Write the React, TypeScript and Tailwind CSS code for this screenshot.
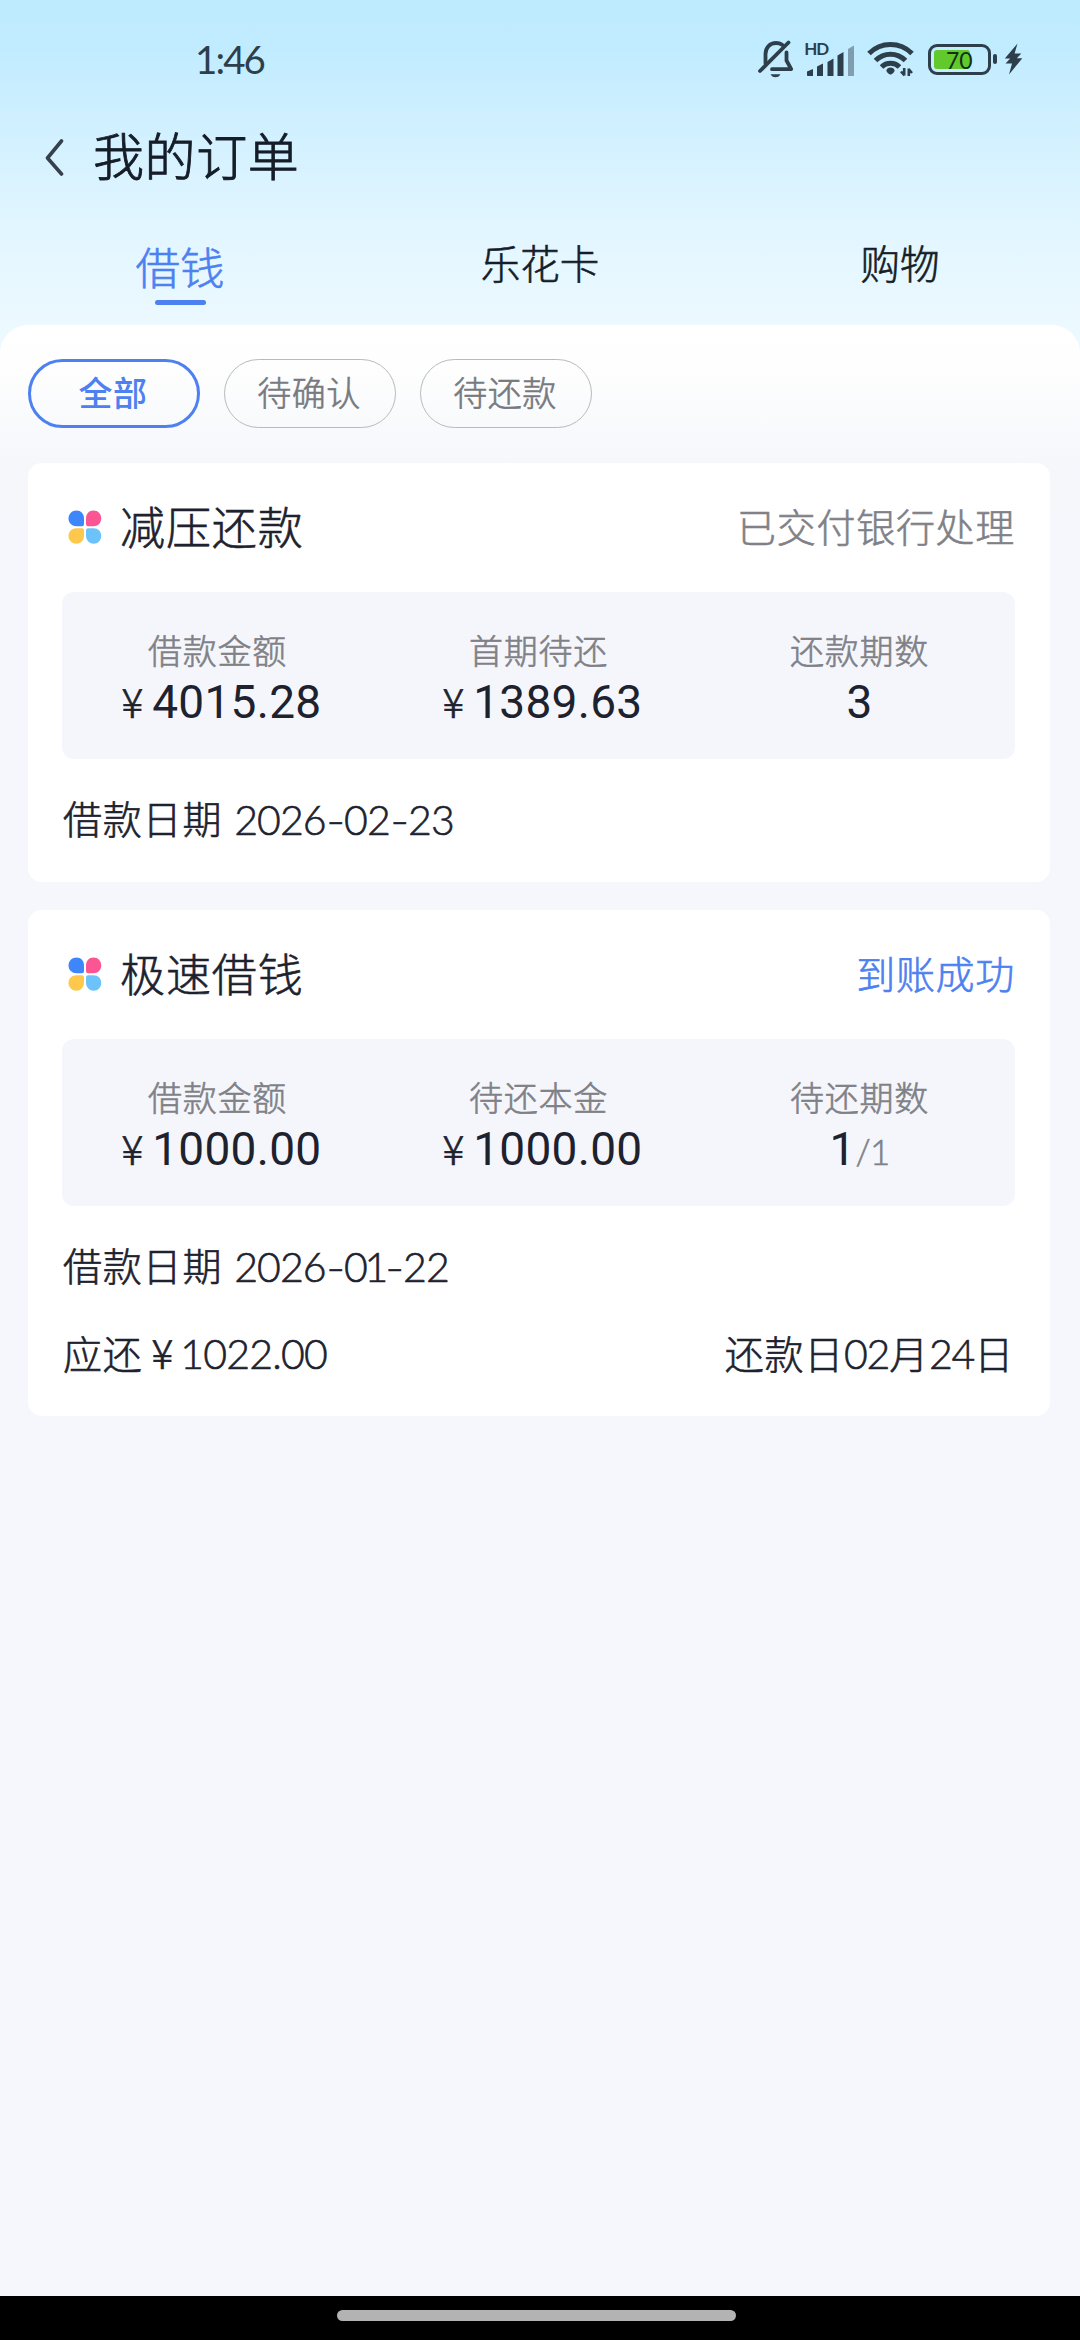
import React from 'react';

const CJK = "font-['Noto_Sans_CJK_SC',sans-serif]";
const LATO = "font-['Lato','Noto_Sans_CJK_SC',sans-serif] font-normal [-webkit-text-stroke:0px]";
const LATO_THIN = "font-['Lato','Noto_Sans_CJK_SC',sans-serif] font-light [-webkit-text-stroke:0.6px]";
const ROBOTO = "font-['Roboto','Noto_Sans_CJK_SC',sans-serif] font-normal [-webkit-text-stroke:0px]";

function MutedBell() {
  return (
    <svg width="36" height="38" viewBox="0 0 36 38" fill="none" stroke="#2d3f4b" strokeWidth="3.8" strokeLinecap="round">
      <path d="M7.5 23.5V14C7.5 7.5 12 3 18 3C20.5 3 22.5 3.6 24.3 4.8" />
      <path d="M28.5 12.5V20.5L33.2 29.2H14" strokeLinejoin="round" />
      <path d="M30.5 2.5L2 31" />
      <path d="M12.5 34.2H22.5C21 36.6 19.5 37.2 17.5 37.2S14 36.6 12.5 34.2Z" fill="#2d3f4b" stroke="none" />
    </svg>
  );
}

function Signal() {
  return (
    <svg className="[-webkit-text-stroke:0px]" width="52" height="38" viewBox="0 -4 52 38" fill="#2d3f4b">
      <text x="0.2" y="12" fontSize="17" fontWeight="700" fontFamily="Lato, sans-serif" textLength="25">HD</text>
      <path d="M3 28.5L9 26V33H3.8Q3 33 3 32.2Z" />
      <path d="M13 23.5L19 20.5V33H13Z" />
      <path d="M23.5 19L29.5 15.5V33H23.5Z" />
      <path d="M33.5 12.5L39.5 9V33H33.5Z" />
      <path d="M44 6L50 2.5V33H44Z" fillOpacity="0.45" />
    </svg>
  );
}

function Wifi() {
  return (
    <svg width="47" height="36" viewBox="0 0 47 36" fill="none" stroke="#2d3f4b" strokeWidth="5">
      <path d="M2 12.5C14 0.5 33 0.5 45 12.5" />
      <path d="M8.5 19.5C17 11 30 11 38.5 19.5" />
      <path d="M14.5 26C19.5 21 27.5 21 32.5 26" />
      <path d="M23.5 26.5C26 26.5 27.6 28 27.6 29.5C27.6 31 25 33.5 23.5 33.5S19.4 31 19.4 29.5C19.4 28 21 26.5 23.5 26.5Z" fill="#2d3f4b" stroke="none" />
      <path d="M37.2 27V34.5M37.5 34.5L34 30.5M41.8 35V27.5M41.5 28L45 32" strokeWidth="2.6" />
    </svg>
  );
}

function Battery() {
  return (
    <div className="flex items-center">
      <div className="flex h-[31px] w-[63px] rounded-[9px] border-[3px] border-[#2d3f4b] p-[3px]">
        <div className="relative h-full w-[36px] rounded-[3px] bg-[#62c92c]">
          <span className={`absolute -top-[2px] left-[12px] text-[23px] leading-[24px] text-[#12301c] ${LATO}`}>70</span>
        </div>
      </div>
      <div className="ml-[2px] h-[10px] w-[4px] rounded-[2px] bg-[#2d3f4b]" />
      <svg className="ml-[7px]" width="19" height="32" viewBox="0 0 19 32" fill="#2d3f4b">
        <path d="M13.5 0.5L0.8 15.5H6.2L1.5 20.5H8L5 31.5L18.3 15.2H12.8L17.3 10.5H10.6Z" />
      </svg>
    </div>
  );
}

function Flower() {
  return (
    <svg className="-mt-[2px]" width="34" height="34" viewBox="0 0 34 34">
      <path d="M8.5 0.5C13 0.5 16 4 16 8.5V14Q16 16.2 14 16.2H8.5C4 16.2 0.5 13 0.5 8.5S4 0.5 8.5 0.5Z" fill="#3d86fb" />
      <path d="M25.5 0.5C21 0.5 18 4 18 8.5V14Q18 16.2 20 16.2H25.5C30 16.2 33.2 13 33.2 8.5S30 0.5 25.5 0.5Z" fill="#fb5593" />
      <path d="M8.5 33.7C13 33.7 16 30 16 25.5V20.3Q16 18.2 14 18.2H8.5C4 18.2 0.5 21.2 0.5 25.7S4 33.7 8.5 33.7Z" fill="#fdc84b" />
      <path d="M25.5 33.7C21 33.7 18 30 18 25.5V20.3Q18 18.2 20 18.2H25.5C30 18.2 33.2 21.2 33.2 25.7S30 33.7 25.5 33.7Z" fill="#6cc3f9" />
    </svg>
  );
}

function Yen({ className }: { className: string }) {
  return (
    <span className={`text-[40.5px] font-light tracking-normal [-webkit-text-stroke:0.7px] ${CJK} ${className}`}>¥</span>
  );
}

function Stat({ label, amount, children }: { label: string; amount?: string; children?: React.ReactNode }) {
  return (
    <div className="flex flex-col items-center pt-[33px]">
      <div className="h-[50px] text-[34px] leading-[50px] tracking-[0.8px] text-[#7f8187]">{label}</div>
      <div className={`flex h-[54px] items-baseline text-[46px] leading-[54px] text-[#1d222e] ${ROBOTO}`}>
        {amount ? (
          <>
            <Yen className="mr-[9px] ml-[8px] leading-[50px]" />
            <span className="tracking-[0.3px]">{amount}</span>
          </>
        ) : (
          children
        )}
      </div>
    </div>
  );
}

function Card({
  title,
  status,
  statusClass,
  stats,
  children,
  className,
}: {
  title: string;
  status: string;
  statusClass: string;
  stats: React.ReactNode;
  children: React.ReactNode;
  className: string;
}) {
  return (
    <section className={`ml-[28px] w-[1022px] rounded-[14px] bg-white ${className}`}>
      <div className="flex h-[129px] items-center pr-[35px] pl-[40px]">
        <Flower />
        <h2 className="ml-[18px] pb-[4px] text-[45px] leading-[60px] font-light tracking-[0.9px] text-[#1d222e]">{title}</h2>
        <div className={`ml-auto pb-[5px] text-[39px] leading-[56px] tracking-[0.7px] ${statusClass}`}>{status}</div>
      </div>
      <div className="mr-[35px] ml-[34px] h-[167px] rounded-[12px] bg-[#f5f6fb]">
        <div className="-mx-[5px] grid grid-cols-3">{stats}</div>
      </div>
      <div className="pt-[17px] pr-[36px] pl-[35px] text-[#1d222e]">{children}</div>
    </section>
  );
}

function Hyphen() {
  return <span className="inline-block origin-center scale-x-[1.25] px-[2px]">-</span>;
}

function DateRow({ date }: { date: string[] }) {
  return (
    <div className="flex h-[88px] items-center pb-[5px] text-[39px] tracking-[0.8px]">
      <span>借款日期</span>
      <span className={`ml-[12px] pt-[4px] text-[41px] tracking-[-0.9px] ${LATO_THIN}`}>
        {date[0]}
        <Hyphen />
        <span className={date[1].includes('1') ? 'tracking-[-3.4px]' : ''}>{date[1]}</span>
        <Hyphen />
        {date[2]}
      </span>
    </div>
  );
}

function Tab({ label, active }: { label: string; active?: boolean }) {
  return active ? (
    <div className="flex flex-col items-center text-[#4d80f0]">
      <div className="h-[67px] text-[44.5px] leading-[66px]">{label}</div>
      <div className="h-[5px] w-[51px] rounded-full bg-[#4d80f0]" />
    </div>
  ) : (
    <div className="flex flex-col items-center text-[39.5px] leading-[58px] text-[#141d28]">{label}</div>
  );
}

function Pill({ label, active }: { label: string; active?: boolean }) {
  return (
    <div
      className={
        active
          ? 'flex h-[69px] w-[172px] items-center justify-center rounded-full border-[3px] border-[#4d80f0] pr-[2px] pb-[5px] text-[34px] font-medium tracking-[0.5px] text-[#4d80f0] [-webkit-text-stroke:0px]'
          : 'flex h-[69px] w-[172px] items-center justify-center rounded-full border border-[#b9babd] pr-[2px] pb-[5px] text-[34px] tracking-[0.5px] text-[#77797f]'
      }
    >
      {label}
    </div>
  );
}

export default function App() {
  return (
    <div
      className={`flex h-[2340px] w-[1080px] flex-col overflow-hidden bg-[#f5f7fc] font-light whitespace-nowrap [-webkit-text-stroke:0.6px] ${CJK}`}
    >
      <header className="-mb-[30px] h-[355px] shrink-0 bg-[linear-gradient(180deg,#bfebff_0px,#c1ecff_50px,#d3f1ff_140px,#e2f6ff_230px,#ecf9ff_325px)]">
        <div className="flex h-[118px] items-center">
          <div className={`ml-[195px] text-[38.5px] leading-[50px] tracking-[-1.9px] text-[#2d3f4b] ${LATO}`}>1:46</div>
          <div className="mr-[57px] ml-auto flex items-center">
            <MutedBell />
            <div className="-mt-[2px] ml-[10px]"><Signal /></div>
            <div className="ml-[11px]"><Wifi /></div>
            <div className="ml-[14px]"><Battery /></div>
          </div>
        </div>
        <div className="flex h-[78px] items-center pl-[44px]">
          <svg width="22" height="38" viewBox="0 0 22 38" fill="none" stroke="#36414d" strokeWidth="3.6" strokeLinecap="round" strokeLinejoin="round">
            <path d="M17.5 3L3.5 20L17.5 36" />
          </svg>
          <h1 className="ml-[27px] pb-[6px] text-[51px] leading-[70px] font-light tracking-[0.6px] text-[#141d28] [-webkit-text-stroke:0.9px]">我的订单</h1>
        </div>
        <nav className="mt-[37px] grid grid-cols-3">
          <Tab label="借钱" active />
          <Tab label="乐花卡" />
          <Tab label="购物" />
        </nav>
      </header>
      <main className="flex flex-1 flex-col rounded-t-[28px] bg-[linear-gradient(180deg,#ffffff_0px,#fefefe_40px,#f5f7fb_140px,#f5f7fc_200px)]">
        <div className="flex gap-[24px] pt-[34px] pl-[28px]">
          <Pill label="全部" active />
          <Pill label="待确认" />
          <Pill label="待还款" />
        </div>
        <Card
          className="mt-[35px] h-[419px]"
          title="减压还款"
          status="已交付银行处理"
          statusClass="text-[#7f8187]"
          stats={
            <>
              <Stat label="借款金额" amount="4015.28" />
              <Stat label="首期待还" amount="1389.63" />
              <Stat label="还款期数">3</Stat>
            </>
          }
        >
          <DateRow date={['2026', '02', '23']} />
        </Card>
        <Card
          className="mt-[28px] h-[506px]"
          title="极速借钱"
          status="到账成功"
          statusClass="text-[#4d80f0]"
          stats={
            <>
              <Stat label="借款金额" amount="1000.00" />
              <Stat label="待还本金" amount="1000.00" />
              <Stat label="待还期数">
                <span>1</span>
                <span className={`text-[35px] tracking-[-0.8px] text-[#7f8187] ${LATO_THIN}`}>/1</span>
              </Stat>
            </>
          }
        >
          <DateRow date={['2026', '01', '22']} />
          <div className="flex h-[88px] items-center justify-between pb-[3px] text-[39px] tracking-[0.8px]">
            <div className="flex items-baseline">
              <span>应还</span>
              <Yen className="mr-[7px] ml-[9px]" />
              <span className={`text-[41px] tracking-[-0.8px] ${LATO_THIN}`}>1022.00</span>
            </div>
            <div>
              还款日<span className={`text-[41px] tracking-[-1.2px] ${LATO_THIN}`}>02</span>月<span className={`text-[41px] tracking-[-1.2px] ${LATO_THIN}`}>24</span>日
            </div>
          </div>
        </Card>
      </main>
      <footer className="flex h-[44px] shrink-0 justify-center bg-black pt-[14px]">
        <div className="mr-[7px] h-[11px] w-[399px] rounded-full bg-[#b3b3b3]" />
      </footer>
    </div>
  );
}
